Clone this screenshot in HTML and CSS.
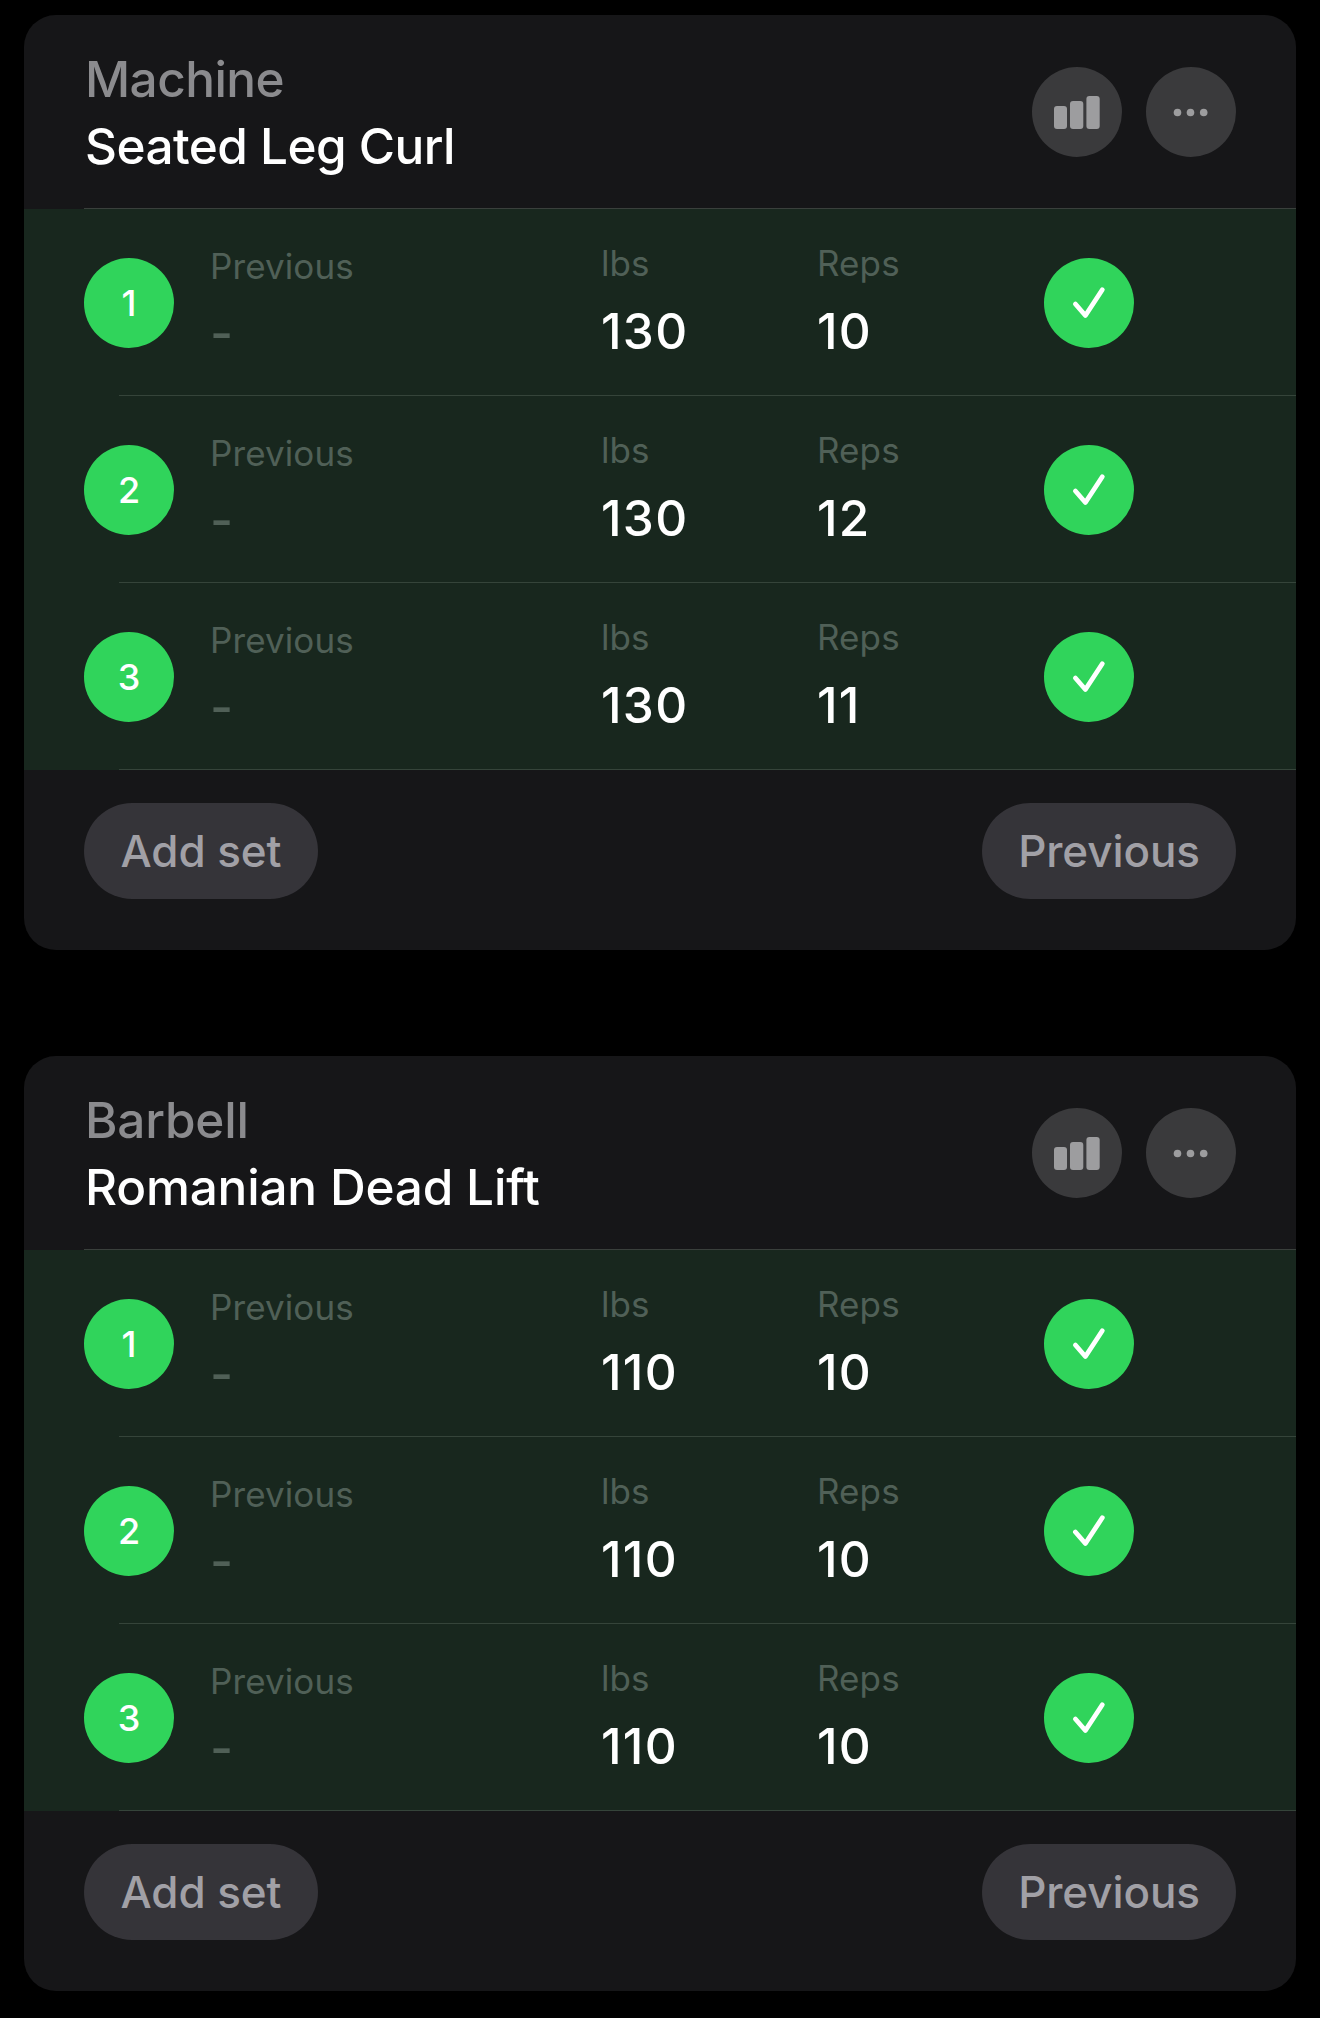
FILE: index.html
```
<!DOCTYPE html>
<html lang="en">
<head>
    <meta charset="UTF-8">
    <meta name="viewport" content="width=device-width, initial-scale=1.0">
    <title>Workout</title>

    <link rel="stylesheet" href="styles.css">
</head>

<body>
    <!-- Icons shared by both cards -->
    <svg class="sprite" width="0" height="0">
        <symbol id="icon-bars" viewBox="0 0 90 90">
            <rect x="22" y="39" width="13" height="23" rx="3"/>
            <rect x="38" y="34" width="13.3" height="28" rx="3"/>
            <rect x="54.4" y="29" width="13.3" height="33" rx="3"/>
        </symbol>
        <symbol id="icon-dots" viewBox="0 0 90 90">
            <circle cx="31.5" cy="45.5" r="3.8"/>
            <circle cx="44.5" cy="45.5" r="3.8"/>
            <circle cx="57.7" cy="45.5" r="3.8"/>
        </symbol>
        <symbol id="icon-check" viewBox="0 0 90 90">
            <path d="M31.4 46 L41.4 57.5 L58.3 31.7" fill="none" stroke="#fff" stroke-width="4.8" stroke-linecap="round" stroke-linejoin="round"/>
        </symbol>
    </svg>

    <div class="card">
        <div class="card-header">
            <div class="titles">
                <p class="equipment">Machine</p>
                <h2 class="exercise">Seated Leg Curl</h2>
            </div>
            <div class="actions">
                <button class="round-button"><svg><use href="#icon-bars"/></svg></button>
                <button class="round-button"><svg><use href="#icon-dots"/></svg></button>
            </div>
        </div>

        <div class="set">
            <span class="set-number">1</span>
            <div class="field previous"><span class="label">Previous</span><span class="value">-</span></div>
            <div class="field"><span class="label">lbs</span><span class="value">130</span></div>
            <div class="field"><span class="label">Reps</span><span class="value">10</span></div>
            <button class="done"><svg><use href="#icon-check"/></svg></button>
        </div>
        <div class="set">
            <span class="set-number">2</span>
            <div class="field previous"><span class="label">Previous</span><span class="value">-</span></div>
            <div class="field"><span class="label">lbs</span><span class="value">130</span></div>
            <div class="field"><span class="label">Reps</span><span class="value">12</span></div>
            <button class="done"><svg><use href="#icon-check"/></svg></button>
        </div>
        <div class="set">
            <span class="set-number">3</span>
            <div class="field previous"><span class="label">Previous</span><span class="value">-</span></div>
            <div class="field"><span class="label">lbs</span><span class="value">130</span></div>
            <div class="field"><span class="label">Reps</span><span class="value">11</span></div>
            <button class="done"><svg><use href="#icon-check"/></svg></button>
        </div>

        <div class="card-footer">
            <button class="pill add">Add set</button>
            <button class="pill prev">Previous</button>
        </div>
    </div>

    <div class="card">
        <div class="card-header">
            <div class="titles wide">
                <p class="equipment">Barbell</p>
                <h2 class="exercise">Romanian Dead Lift</h2>
            </div>
            <div class="actions">
                <button class="round-button"><svg><use href="#icon-bars"/></svg></button>
                <button class="round-button"><svg><use href="#icon-dots"/></svg></button>
            </div>
        </div>

        <div class="set">
            <span class="set-number">1</span>
            <div class="field previous"><span class="label">Previous</span><span class="value">-</span></div>
            <div class="field"><span class="label">lbs</span><span class="value">110</span></div>
            <div class="field"><span class="label">Reps</span><span class="value">10</span></div>
            <button class="done"><svg><use href="#icon-check"/></svg></button>
        </div>
        <div class="set">
            <span class="set-number">2</span>
            <div class="field previous"><span class="label">Previous</span><span class="value">-</span></div>
            <div class="field"><span class="label">lbs</span><span class="value">110</span></div>
            <div class="field"><span class="label">Reps</span><span class="value">10</span></div>
            <button class="done"><svg><use href="#icon-check"/></svg></button>
        </div>
        <div class="set">
            <span class="set-number">3</span>
            <div class="field previous"><span class="label">Previous</span><span class="value">-</span></div>
            <div class="field"><span class="label">lbs</span><span class="value">110</span></div>
            <div class="field"><span class="label">Reps</span><span class="value">10</span></div>
            <button class="done"><svg><use href="#icon-check"/></svg></button>
        </div>

        <div class="card-footer">
            <button class="pill add">Add set</button>
            <button class="pill prev">Previous</button>
        </div>
    </div>
</body>
</html>
```

FILE: styles.css
```
* {
    padding: 0;
    margin: 0;
    box-sizing: border-box;
}

:root {
    --card: #161618;
    --row: #18271e;
    --green: #30d45b;
    --line: #35443a;
    --muted: #506057;
}

body {
    display: flex;
    flex-direction: column;
    gap: 106px;
    padding: 15px 24px 27px;
    background-color: #000;
    color: #fff;
    font-family: Inter, "Liberation Sans", sans-serif;
}

button {
    border: none;
    font: inherit;
    cursor: pointer;
}

svg {
    display: block;
    width: 90px;
    height: 90px;
}

.sprite {
    display: none;
}

.card {
    height: 935px;
    border-radius: 32px;
    background-color: var(--card);
    overflow: hidden;
}

.card-header {
    display: flex;
    justify-content: space-between;
    height: 194px;
    padding: 30px 60px 0;
    background: linear-gradient(#3a403c, #3a403c) 60px 100% / 100% 1px no-repeat;
}

.titles {
    padding: 1px 0 0 1px;
    letter-spacing: -0.55px;
}

.titles.wide {
    letter-spacing: -0.2px;
}

.equipment,
.exercise {
    font-size: 49.5px;
    font-weight: 500;
    line-height: 67px;
}

.equipment {
    color: #8b8b8e;
}

.actions {
    display: flex;
    gap: 24px;
    padding-top: 22px;
}

.round-button {
    width: 90px;
    height: 90px;
    border-radius: 50%;
    background-color: #3a3a3c;
    fill: #9d9d9f;
}

/* One logged set */
.set {
    display: grid;
    grid-template-columns: 126px 390px 216px 228px 90px;
    height: 187px;
    padding-left: 60px;
    background: linear-gradient(var(--line), var(--line)) 95px 100% / 100% 1px no-repeat var(--row);
}

.set-number,
.done {
    width: 90px;
    height: 90px;
    margin-top: 49px;
    border-radius: 50%;
    background-color: var(--green);
}

.set-number {
    font-size: 36px;
    font-weight: 500;
    line-height: 90px;
    text-align: center;
}

.field {
    display: flex;
    flex-direction: column;
    gap: 16px;
    padding: 32px 0 0 1px;
}

.label {
    color: var(--muted);
    font-size: 35px;
    line-height: 44px;
    letter-spacing: 0.1px;
}

.value {
    font-size: 49.5px;
    font-weight: 500;
    line-height: 60px;
    letter-spacing: 1.3px;
}

.previous {
    gap: 15px;
    padding: 35px 0 0;
}

.previous .value {
    color: var(--muted);
    font-size: 50px;
}

.card-footer {
    display: flex;
    justify-content: space-between;
    padding: 33px 60px 0;
}

.pill {
    height: 96px;
    border-radius: 48px;
    background-color: #353439;
    color: #a1a0a6;
    font-size: 44px;
    font-weight: 500;
    line-height: 96px;
    letter-spacing: -0.1px;
}

.add {
    width: 234px;
}

.prev {
    width: 254px;
}
```
